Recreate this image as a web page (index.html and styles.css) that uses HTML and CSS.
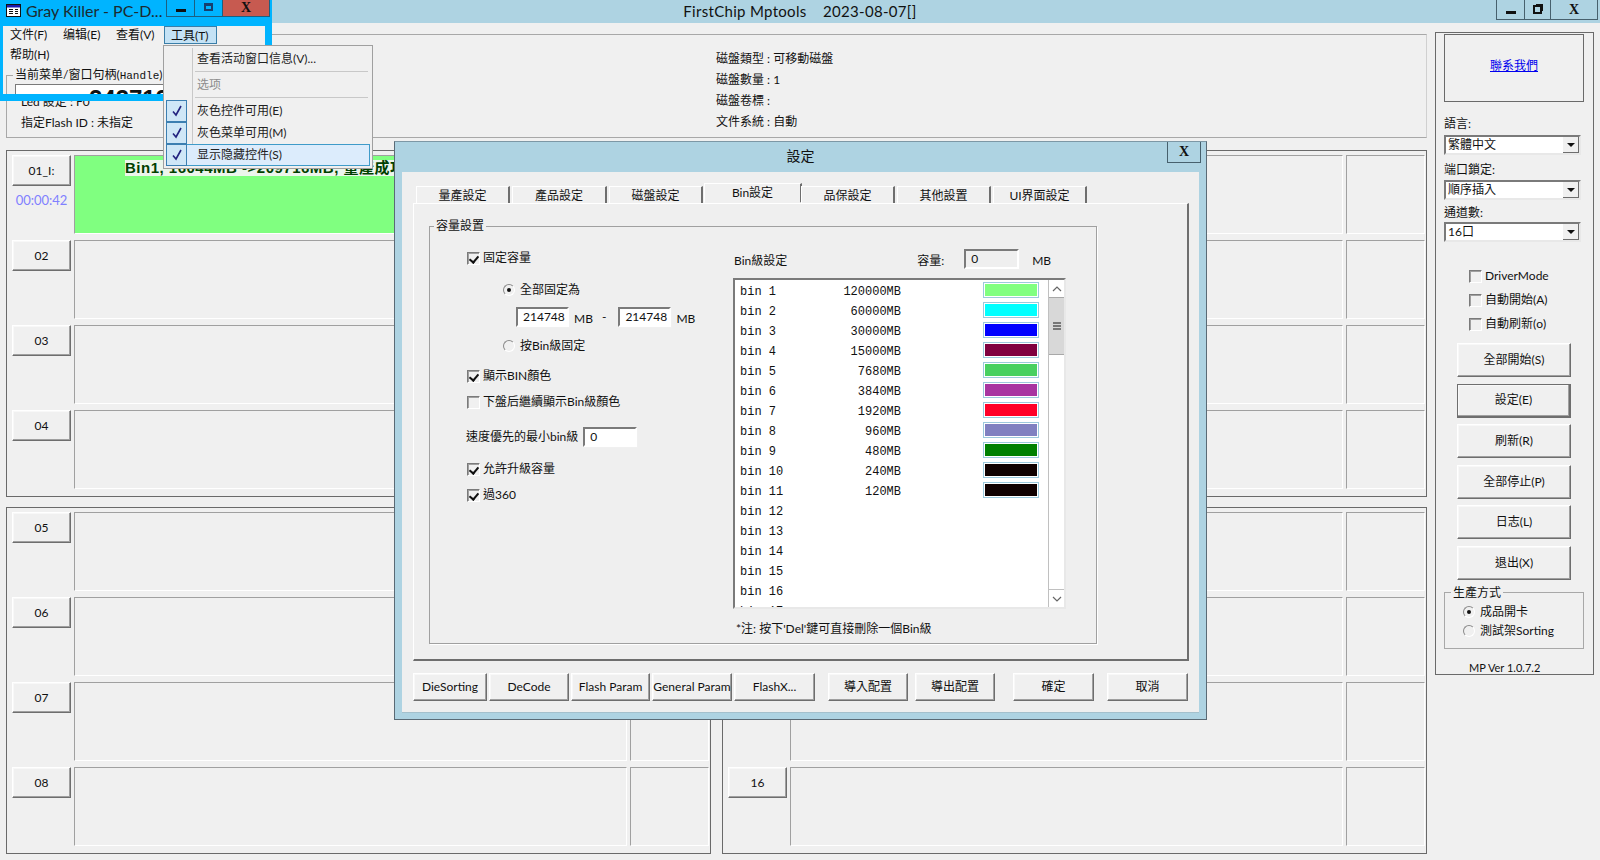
FILE: index.html
```html
<!DOCTYPE html>
<html lang="zh-Hant">
<head>
    <meta charset="UTF-8">
    <meta name="viewport" content="width=device-width, initial-scale=1.0">
    <title>FirstChip Mptools</title>
    <link rel="stylesheet" href="styles.css">
</head>
<body>
    <div class="titlebar">
        <span class="titlebar-text">FirstChip Mptools &nbsp;&nbsp; 2023-08-07[]</span>
        <div class="win-btns">
            <div class="win-btn first"><span class="ic-min"></span></div>
            <div class="win-btn"><span class="ic-restore"></span></div>
            <div class="win-btn wide">X</div>
        </div>
    </div>

    <div class="workspace">
        <div class="left">
            <div class="infobox">
                <div class="info-left">
                    <p>Led 設定 : F0</p>
                    <p>指定Flash ID : 未指定</p>
                </div>
                <div class="info-mid">
                    <p>磁盤類型 : 可移動磁盤</p>
                    <p>磁盤數量 : 1</p>
                    <p>磁盤卷標 :</p>
                    <p>文件系統 : 自動</p>
                </div>
            </div>

            <div class="channels">
                <div class="chgroup">
                    <div class="ch">
                        <div class="ch-side">
                            <div class="raised ch-btn">01_I:</div>
                            <div class="ch-time">00:00:42</div>
                        </div>
                        <div class="slot slot-ok"><span class="slot-msg">Bin1, 16044MB -&gt;209716MB, 量產成功</span></div>
                        <div class="slot-end"></div>
                    </div>
                    <div class="ch"><div class="ch-side"><div class="raised ch-btn">02</div></div><div class="slot"></div><div class="slot-end"></div></div>
                    <div class="ch"><div class="ch-side"><div class="raised ch-btn">03</div></div><div class="slot"></div><div class="slot-end"></div></div>
                    <div class="ch"><div class="ch-side"><div class="raised ch-btn">04</div></div><div class="slot"></div><div class="slot-end"></div></div>
                </div>
                <div class="chgroup">
                    <div class="ch"><div class="ch-side"><div class="raised ch-btn">09</div></div><div class="slot"></div><div class="slot-end"></div></div>
                    <div class="ch"><div class="ch-side"><div class="raised ch-btn">10</div></div><div class="slot"></div><div class="slot-end"></div></div>
                    <div class="ch"><div class="ch-side"><div class="raised ch-btn">11</div></div><div class="slot"></div><div class="slot-end"></div></div>
                    <div class="ch"><div class="ch-side"><div class="raised ch-btn">12</div></div><div class="slot"></div><div class="slot-end"></div></div>
                </div>
                <div class="chgroup">
                    <div class="ch"><div class="ch-side"><div class="raised ch-btn">05</div></div><div class="slot"></div><div class="slot-end"></div></div>
                    <div class="ch"><div class="ch-side"><div class="raised ch-btn">06</div></div><div class="slot"></div><div class="slot-end"></div></div>
                    <div class="ch"><div class="ch-side"><div class="raised ch-btn">07</div></div><div class="slot"></div><div class="slot-end"></div></div>
                    <div class="ch"><div class="ch-side"><div class="raised ch-btn">08</div></div><div class="slot"></div><div class="slot-end"></div></div>
                </div>
                <div class="chgroup">
                    <div class="ch"><div class="ch-side"><div class="raised ch-btn">13</div></div><div class="slot"></div><div class="slot-end"></div></div>
                    <div class="ch"><div class="ch-side"><div class="raised ch-btn">14</div></div><div class="slot"></div><div class="slot-end"></div></div>
                    <div class="ch"><div class="ch-side"><div class="raised ch-btn">15</div></div><div class="slot"></div><div class="slot-end"></div></div>
                    <div class="ch"><div class="ch-side"><div class="raised ch-btn">16</div></div><div class="slot"></div><div class="slot-end"></div></div>
                </div>
            </div>
        </div>

        <div class="side">
            <div class="contact"><a href="#">聯系我們</a></div>
            <div class="side-label first">語言:</div>
            <div class="combo first"><span>繁體中文</span><i class="combo-arrow"></i></div>
            <div class="side-label">端口鎖定:</div>
            <div class="combo"><span>順序插入</span><i class="combo-arrow"></i></div>
            <div class="side-label tight">通道數:</div>
            <div class="combo tight"><span>16口</span><i class="combo-arrow"></i></div>
            <div class="side-checks">
                <label class="check"><i class="box"></i>DriverMode</label>
                <label class="check"><i class="box"></i>自動開始(A)</label>
                <label class="check"><i class="box"></i>自動刷新(o)</label>
            </div>
            <div class="side-btns">
                <div class="raised side-btn">全部開始(S)</div>
                <div class="raised side-btn is-default">設定(E)</div>
                <div class="raised side-btn">刷新(R)</div>
                <div class="raised side-btn">全部停止(P)</div>
                <div class="raised side-btn">日志(L)</div>
                <div class="raised side-btn">退出(X)</div>
            </div>
            <fieldset class="mode">
                <legend>生產方式</legend>
                <label class="radio"><i class="dot on"></i>成品開卡</label>
                <label class="radio"><i class="dot"></i>測試架Sorting</label>
            </fieldset>
            <div class="version">MP Ver 1.0.7.2</div>
        </div>
    </div>

    <!-- floating tool window -->
    <div class="graykiller" lang="zh-Hans">
        <div class="gk-title">
            <svg class="gk-icon" width="15" height="13" viewBox="0 0 15 13">
                <rect x="0.5" y="0.5" width="14" height="12" fill="#fff" stroke="#111"/>
                <rect x="1" y="1" width="13" height="2.5" fill="#1a1ab0"/>
                <path d="M3 5.500h4M3 7.500h4M3 9.500h4M9 5.500h3M9 7.500h3M9 9.500h3" stroke="#111"/>
            </svg>
            <span class="gk-name">Gray Killer - PC-D...</span>
            <div class="gk-btns">
                <div class="gk-btn"><span class="ic-min"></span></div>
                <div class="gk-btn"><span class="ic-max"></span></div>
                <div class="gk-btn gk-close">X</div>
            </div>
        </div>
        <div class="gk-client">
            <div class="gk-menubar">
                <span>文件(F)</span><span>编辑(E)</span><span>查看(V)</span><span class="on">工具(T)</span>
            </div>
            <div class="gk-menubar2">帮助(H)</div>
            <div class="gk-group">
                <div class="gk-legend">当前菜单/窗口句柄(<span class="mono">Handle</span>)</div>
                <div class="gk-value">243713</div>
            </div>
        </div>
    </div>

    <div class="menu" lang="zh-Hans">
        <div class="menu-item">查看活动窗口信息(V)...</div>
        <div class="menu-sep"></div>
        <div class="menu-item off">选项</div>
        <div class="menu-sep"></div>
        <div class="menu-item checked"><i class="tick"><svg width="12" height="12" viewBox="0 0 12 12"><path d="M2 6.500l3 3.500 5-9" fill="none" stroke="#23237f" stroke-width="1.600"/></svg></i>灰色控件可用(E)</div>
        <div class="menu-item checked"><i class="tick"><svg width="12" height="12" viewBox="0 0 12 12"><path d="M2 6.500l3 3.500 5-9" fill="none" stroke="#23237f" stroke-width="1.600"/></svg></i>灰色菜单可用(M)</div>
        <div class="menu-item checked hot"><i class="tick"><svg width="12" height="12" viewBox="0 0 12 12"><path d="M2 6.500l3 3.500 5-9" fill="none" stroke="#23237f" stroke-width="1.600"/></svg></i>显示隐藏控件(S)</div>
    </div>

    <!-- settings dialog -->
    <div class="dialog">
        <div class="dlg-title">
            <span>設定</span>
            <div class="dlg-close">X</div>
        </div>
        <div class="dlg-client">
            <div class="tabs">
                <div class="tab">量產設定</div>
                <div class="tab">產品設定</div>
                <div class="tab">磁盤設定</div>
                <div class="tab active">Bin設定</div>
                <div class="tab">品保設定</div>
                <div class="tab">其他設置</div>
                <div class="tab">UI界面設定</div>
            </div>
            <div class="tab-panel">
                <fieldset class="capacity">
                    <legend>容量設置</legend>
                    <div class="cap-left">
                        <label class="check"><i class="box on"></i>固定容量</label>
                        <label class="radio indent r1"><i class="dot on"></i>全部固定為</label>
                        <div class="range">
                            <span class="edit">214748</span><span class="unit">MB</span><span class="dash">-</span>
                            <span class="edit">214748</span><span class="unit">MB</span>
                        </div>
                        <label class="radio indent r2"><i class="dot"></i>按Bin級固定</label>
                        <label class="check c1"><i class="box on"></i>顯示BIN顏色</label>
                        <label class="check c2"><i class="box"></i>下盤后繼續顯示Bin級顏色</label>
                        <div class="min-bin"><span>速度優先的最小bin級</span><span class="edit short">0</span></div>
                        <label class="check c3"><i class="box on"></i>允許升級容量</label>
                        <label class="check c4"><i class="box on"></i>過360</label>
                    </div>
                    <div class="cap-right">
                        <div class="bin-head">
                            <span>Bin級設定</span>
                            <span class="cap-label">容量:</span>
                            <span class="edit gray">0</span>
                            <span class="cap-unit">MB</span>
                        </div>
                        <div class="binlist">
                            <div class="bin-rows" id="binRows"></div>
                            <div class="scroll">
                                <div class="scroll-btn"><svg width="10" height="6" viewBox="0 0 10 6"><path d="M1 5l4-4 4 4" fill="none" stroke="#666" stroke-width="1.200"/></svg></div>
                                <div class="scroll-thumb"><i></i><i></i><i></i></div>
                                <div class="scroll-space"></div>
                                <div class="scroll-btn"><svg width="10" height="6" viewBox="0 0 10 6"><path d="M1 1l4 4 4-4" fill="none" stroke="#666" stroke-width="1.200"/></svg></div>
                            </div>
                        </div>
                        <div class="bin-note">*注: 按下'Del'鍵可直接刪除一個Bin級</div>
                    </div>
                </fieldset>
            </div>
            <div class="dlg-btns">
                <div class="raised dlg-btn w74">DieSorting</div>
                <div class="raised dlg-btn w80">DeCode</div>
                <div class="raised dlg-btn w79">Flash Param</div>
                <div class="raised dlg-btn w80">General Param</div>
                <div class="raised dlg-btn w81">FlashX...</div>
                <div class="raised dlg-btn w80 ml11">導入配置</div>
                <div class="raised dlg-btn w80 ml5">導出配置</div>
                <div class="raised dlg-btn w81 ml16">確定</div>
                <div class="raised dlg-btn w81 ml11">取消</div>
            </div>
        </div>
    </div>

    <script>
        // bin table, filled from data so the rows stay in one place
        const bins = [
            ['120000MB', '#80ff80'], ['60000MB', '#00ffff'], ['30000MB', '#0000ff'],
            ['15000MB', '#800040'], ['7680MB', '#48d060'], ['3840MB', '#a834a0'],
            ['1920MB', '#ff0028'], ['960MB', '#8080c0'], ['480MB', '#008000'],
            ['240MB', '#100000'], ['120MB', '#100000']
        ];
        const rows = document.getElementById('binRows');
        let html = '';
        for (let i = 0; i < 17; i++) {
            const b = bins[i];
            html += '<div class="bin-row"><span class="bin-name">bin ' + (i + 1) + '</span>';
            if (b) {
                html += '<span class="bin-size">' + b[0] + '</span>';
                html += '<span class="bin-swatch"><i style="background:' + b[1] + '"></i></span>';
            }
            html += '</div>';
        }
        rows.innerHTML = html;
    </script>
</body>
</html>
```
FILE: styles.css
```css
* {
    box-sizing: border-box;
}

body {
    margin: 0;
    width: 1600px;
    height: 860px;
    overflow: hidden;
    position: relative;
    background: #f0f0f0;
    color: #111;
    font-family: Lato, "Noto Sans CJK TC", sans-serif;
    font-size: 12px;
    line-height: 16px;
}

p {
    margin: 0;
}

i {
    font-style: normal;
}

/* classic 3d edges */
.raised {
    background: #f0f0f0;
    border: 1px solid;
    border-color: #fff #6e6e6e #6e6e6e #fff;
    box-shadow: inset -1px -1px 0 #a0a0a0, inset 1px 1px 0 #f8f8f8;
    display: flex;
    align-items: center;
    justify-content: center;
}

.edit {
    display: flex;
    align-items: center;
    height: 20px;
    padding-left: 5px;
    background: #fff;
    border: 2px solid;
    border-color: #7a7a7a #fff #fff #7a7a7a;
    outline: 1px solid #f0f0f0;
}

/* main title bar */
.titlebar {
    height: 23px;
    padding-bottom: 1px;
    background: #aed3e2;
    position: relative;
    display: flex;
    justify-content: center;
    align-items: center;
    font-size: 15px;
}

.titlebar-text {
    letter-spacing: 0.3px;
}

.win-btns {
    position: absolute;
    right: 2px;
    top: 0;
    height: 20px;
    display: flex;
    border: 1px solid #47606d;
    border-top: 0;
}

.win-btn {
    width: 26px;
    border-right: 1px solid #47606d;
    display: flex;
    align-items: center;
    justify-content: center;
    font-family: "Liberation Serif", serif;
    font-weight: bold;
    font-size: 14px;
}

.win-btn.first {
    width: 28px;
}

.win-btn:last-child {
    border-right: 0;
}

.win-btn.wide {
    width: 46px;
}

.ic-min {
    display: block;
    width: 10px;
    height: 3px;
    margin-top: 5px;
    background: #111;
}

.ic-restore {
    display: block;
    width: 9px;
    height: 9px;
    border: 2px solid #111;
    box-shadow: 2px -2px 0 -1px #111;
}

.ic-max {
    display: block;
    width: 9px;
    height: 8px;
    border: 2px solid #173f6e;
    border-top-width: 3px;
    margin-bottom: 3px;
}

/* workspace */
.workspace {
    display: flex;
    gap: 8px;
    padding: 9px 6px 0;
}

.left {
    width: 1421px;
}

.infobox {
    height: 104px;
    margin-top: 2px;
    border: 1px solid #a8a8a8;
    border-right-color: #d0d0d0;
    display: flex;
    padding: 16px 0 6px 14px;
}

.info-left {
    width: 695px;
    display: flex;
    flex-direction: column;
    justify-content: flex-end;
    gap: 5px;
}

.info-mid {
    display: flex;
    flex-direction: column;
    gap: 5px;
}

.channels {
    margin-top: 12px;
    display: grid;
    grid-template-columns: 705px 705px;
    column-gap: 11px;
    row-gap: 10px;
}

.chgroup {
    height: 347px;
    border: 1px solid #6a6a6a;
    padding: 4px 1px 0 5px;
    display: flex;
    flex-direction: column;
    gap: 6px;
}

.ch {
    height: 79px;
    display: flex;
}

.ch-side {
    width: 62px;
    flex: none;
}

.ch-btn {
    width: 59px;
    height: 31px;
}

.ch-time {
    margin-top: 6px;
    text-align: center;
    color: #8080ff;
    font-size: 13px;
    padding-right: 3px;
}

.slot,
.slot-end {
    border: 1px solid;
    border-color: #a0a0a0 #fff #fff #a0a0a0;
    background-clip: padding-box;
}

.slot {
    width: 553px;
    overflow: hidden;
    white-space: nowrap;
}

.slot-end {
    width: 79px;
    margin-left: 3px;
}

.slot-ok {
    background-color: #80ff80;
    padding-left: 50px;
}

.slot-msg {
    display: inline-block;
    margin-top: 4px;
    background: #ecf5ec;
    color: #004000;
    font-family: "Liberation Sans", "Noto Sans CJK TC", sans-serif;
    font-weight: bold;
    font-size: 15px;
    letter-spacing: 0.5px;
    line-height: 16px;
}

/* right panel */
.side {
    width: 159px;
    height: 643px;
    border: 1px solid #6a6a6a;
    padding: 1px 0 0 8px;
}

.contact {
    width: 140px;
    height: 68px;
    padding-bottom: 4px;
    border: 1px solid #6a6a6a;
    display: flex;
    align-items: center;
    justify-content: center;
}

.contact a {
    color: #0000ee;
}

.side-label {
    height: 16px;
    margin-top: 7px;
}

.side-label.first {
    margin-top: 14px;
}

.side-label.tight {
    margin-top: 5px;
}

.combo {
    width: 137px;
    height: 20px;
    margin-top: 2px;
    background: #fff;
    border: 2px solid;
    border-color: #7a7a7a #e8e8e8 #e8e8e8 #7a7a7a;
    display: flex;
    align-items: center;
    justify-content: space-between;
    padding-left: 2px;
}

.combo.first {
    margin-top: 3px;
}

.combo.tight {
    margin-top: 1px;
}

.combo-arrow {
    width: 16px;
    height: 16px;
    background: #f0f0f0;
    border-right: 1px solid #6e6e6e;
    border-bottom: 1px solid #6e6e6e;
    position: relative;
}

.combo-arrow::after {
    content: "";
    position: absolute;
    left: 4px;
    top: 6px;
    border: 4px solid transparent;
    border-top: 4px solid #111;
}

.check,
.radio {
    display: flex;
    align-items: center;
    height: 20px;
}

.box {
    width: 13px;
    height: 13px;
    margin-right: 3px;
    background: #f0f0f0;
    border: 1px solid;
    border-color: #7a7a7a #fff #fff #7a7a7a;
    box-shadow: inset 1px 1px 0 #a0a0a0;
    position: relative;
    flex: none;
}

.box.on::after {
    content: "";
    position: absolute;
    left: 3px;
    top: 1px;
    width: 4px;
    height: 7px;
    border: solid #111;
    border-width: 0 2px 2px 0;
    transform: rotate(40deg);
}

.dot {
    width: 12px;
    height: 12px;
    margin-right: 5px;
    border-radius: 50%;
    background: #f0f0f0;
    border: 1px solid;
    border-color: #8a8a8a #fff #fff #8a8a8a;
    position: relative;
    flex: none;
}

.dot.on::after {
    content: "";
    position: absolute;
    left: 3px;
    top: 3px;
    width: 4px;
    height: 4px;
    border-radius: 50%;
    background: #111;
}

.side-checks {
    margin: 24px 0 0 25px;
    display: flex;
    flex-direction: column;
    gap: 4px;
}

.side-btns {
    margin: 9px 0 0 13px;
    display: flex;
    flex-direction: column;
    gap: 6.600px;
}

.side-btn {
    width: 114px;
    height: 34px;
}

.side-btn.is-default {
    border-color: #6e6e6e;
    border-width: 1px 2px 2px 1px;
}

.mode {
    margin: 5px 0 0;
    padding: 2px 0 0 18px;
    width: 140px;
    height: 64px;
    border: 1px solid #a8a8a8;
}

.mode legend {
    padding: 0 2px;
    margin-left: -12px;
}

.mode .radio {
    height: 19px;
}

.version {
    margin-top: 11px;
    padding-left: 25px;
    font-size: 11px;
}

/* Gray Killer */
.graykiller {
    position: absolute;
    left: 0;
    top: 0;
    width: 272px;
    height: 101px;
    background: #00b4ff;
    font-family: Lato, "Noto Sans CJK SC", sans-serif;
}

.gk-title {
    height: 26px;
    display: flex;
    align-items: flex-start;
    position: relative;
}

.gk-icon {
    margin: 4px 0 0 6px;
}

.gk-name {
    margin-left: 5px;
    font-size: 16px;
    line-height: 22px;
    color: #1c2a30;
}

.gk-btns {
    position: absolute;
    left: 166px;
    top: 0;
    height: 17px;
    display: flex;
    border: 1px solid #1c5f80;
    border-top: 0;
}

.gk-btn {
    width: 28px;
    border-right: 1px solid #1c5f80;
    display: flex;
    align-items: center;
    justify-content: center;
}

.gk-close {
    width: 46px;
    border-right: 0;
    background: #c75a50;
    font-family: "Liberation Serif", serif;
    font-weight: bold;
    font-size: 14px;
}

.gk-client {
    margin: 0 7px 0 3px;
    height: 68px;
    background: #f0f0f0;
    overflow: hidden;
}

.gk-menubar {
    height: 18px;
    display: flex;
    align-items: center;
}

.gk-menubar span {
    margin-left: 7px;
    width: 46px;
    white-space: nowrap;
}

.gk-menubar .on {
    margin-left: 2px;
    width: 53px;
    height: 18px;
    padding-left: 6px;
    line-height: 17px;
    background: #c4e2f5;
    border: 1px solid #3a7ea8;
}

.gk-menubar2 {
    height: 19px;
    padding-left: 7px;
    line-height: 21px;
}

.gk-group {
    height: 40px;
    margin: 12px 0 0 3px;
    border: 1px solid #a8a8a8;
    border-bottom: 0;
}

.gk-legend {
    margin: -9px 0 0 6px;
    width: max-content;
    background: #f0f0f0;
    padding: 0 2px;
    line-height: 16px;
}

.mono {
    font-family: "Liberation Mono", monospace;
    font-size: 11px;
}

.gk-value {
    margin: 0 0 0 8px;
    width: 228px;
    height: 30px;
    padding-top: 2px;
    background: #fff;
    border: 1px solid #7a7a7a;
    text-align: center;
    font-family: "Liberation Sans", sans-serif;
    font-weight: bold;
    font-size: 24px;
    line-height: 24px;
}

/* tools menu */
.menu {
    position: absolute;
    left: 163px;
    top: 45px;
    width: 210px;
    height: 124px;
    padding: 2px;
    background: #f0f0f0;
    border: 1px solid #a0a0a0;
    font-family: Lato, "Noto Sans CJK SC", sans-serif;
    color: #222;
}

.menu::before {
    content: "";
    position: absolute;
    left: 28px;
    top: 2px;
    bottom: 22px;
    width: 1px;
    background: #c8c8c8;
}

.menu-item {
    height: 22px;
    padding-left: 31px;
    display: flex;
    align-items: center;
    position: relative;
}

.menu-item.off {
    color: #8c8c8c;
}

.menu-sep {
    height: 1px;
    margin: 1px 2px 2px 29px;
    background: #c8c8c8;
}

.tick {
    position: absolute;
    left: 0;
    top: 0;
    width: 21px;
    height: 22px;
    background: #cfe7f7;
    border: 1px solid #3c7fb1;
    display: flex;
    align-items: center;
    justify-content: center;
}

.menu-item.hot {
    background: #dcecfc;
    outline: 1px solid #3f9bc9;
    outline-offset: -1px;
}

/* settings dialog */
.dialog {
    position: absolute;
    left: 394px;
    top: 141px;
    width: 813px;
    height: 579px;
    background: #aed3e2;
    border: 1px solid #5a6a75;
    border-top-color: #7d97a5;
}

.dlg-title {
    height: 30px;
    padding-bottom: 2px;
    position: relative;
    display: flex;
    align-items: center;
    justify-content: center;
    font-size: 14px;
}

.dlg-close {
    position: absolute;
    left: 772px;
    top: 0;
    width: 34px;
    height: 21px;
    border: 1px solid #47606d;
    border-top: 0;
    display: flex;
    align-items: center;
    justify-content: center;
    font-family: "Liberation Serif", serif;
    font-weight: bold;
    font-size: 14px;
}

.dlg-client {
    height: 541px;
    margin: 0 7px;
    padding: 12px 11px 0;
    background: #efefef;
    border-bottom: 1px solid #a4c0cc;
}

.tabs {
    display: flex;
    align-items: flex-end;
    height: 19px;
    padding-left: 3px;
    position: relative;
    z-index: 1;
}

.tab {
    width: 94px;
    height: 17px;
    margin-right: 2px;
    text-align: center;
    line-height: 18px;
    border-top: 1px solid #fff;
    border-left: 1px solid #fff;
    border-right: 2px solid #6e6e6e;
    background: #f0f0f0;
}

.tab:nth-child(2) {
    width: 95px;
}

.tab.active {
    width: 98px;
    height: 20px;
    margin-left: -1px;
    margin-right: -1px;
    line-height: 17px;
    border-bottom: 1px solid #f0f0f0;
}

.tab-panel {
    width: 776px;
    height: 458px;
    padding: 14px 0 0 15px;
    border: 1px solid;
    border-color: #fff #6e6e6e #6e6e6e #fff;
    border-width: 1px 2px 2px 1px;
}

.capacity {
    width: 668px;
    height: 426px;
    margin: 0;
    padding: 0;
    border: 1px solid #a0a0a0;
    box-shadow: 1px 1px 0 #fff;
    display: flex;
    position: relative;
}

.capacity legend {
    padding: 0 2px;
    margin-left: 4px;
}

.cap-left {
    width: 304px;
    padding: 14px 0 0 37px;
    display: flex;
    flex-direction: column;
    flex: none;
}

.cap-left .indent {
    margin-left: 36px;
}

.r1 { margin-top: 12px; }
.r2 { margin-top: 9px; }
.c1 { margin-top: 10px; }
.c2 { margin-top: 6px; }
.c3 { margin-top: 12px; }
.c4 { margin-top: 6px; }

.range {
    height: 20px;
    margin: 7px 0 0 49px;
    display: flex;
    align-items: center;
}

.range .edit {
    width: 53px;
}

.unit {
    margin: 4px 6px 0 5px;
}

.dash {
    margin: 0 12px 0 3px;
}

.min-bin {
    height: 20px;
    margin-top: 15px;
    margin-left: -1px;
    display: flex;
    align-items: center;
    gap: 5px;
}

.edit.short {
    width: 54px;
}

.bin-head {
    height: 22px;
    margin-top: 16px;
    display: flex;
    align-items: center;
}

.cap-label {
    margin-left: 130px;
    width: 47px;
}

.edit.gray {
    width: 55px;
    background: #efefef;
    margin-top: -4px;
    border-color: #7a7a7a #fff #fff #7a7a7a;
}

.cap-unit {
    margin-left: 13px;
}

.binlist {
    width: 333px;
    height: 331px;
    margin: 6px 0 0 -1px;
    display: flex;
    background: #fff;
    border: 2px solid;
    border-color: #7a7a7a #e8e8e8 #e8e8e8 #7a7a7a;
    overflow: hidden;
}

.bin-rows {
    width: 313px;
    flex: none;
    font-family: "Liberation Mono", monospace;
    padding: 2px 0 0 5px;
    height: 329px;
    overflow: hidden;
}

.bin-row {
    height: 20px;
    display: flex;
    align-items: center;
    position: relative;
}

.bin-name {
    width: 56px;
}

.bin-size {
    position: absolute;
    left: 59px;
    width: 102px;
    text-align: right;
}

.bin-swatch {
    position: absolute;
    left: 243px;
    top: 0;
    width: 56px;
    height: 16px;
    padding: 1px;
    border: 1px solid #9cc9dd;
    background: #fff;
}

.bin-swatch i {
    display: block;
    height: 100%;
}

.scroll {
    width: 17px;
    display: flex;
    flex-direction: column;
    border-left: 1px solid #c0c0c0;
    border-right: 1px solid #c0c0c0;
    flex: none;
}

.scroll-btn {
    height: 17px;
    display: flex;
    align-items: center;
    justify-content: center;
    flex: none;
}

.scroll-thumb {
    height: 58px;
    background: #d8d8d8;
    border-top: 1px solid #a8a8a8;
    border-bottom: 1px solid #a8a8a8;
    display: flex;
    flex-direction: column;
    align-items: center;
    padding-top: 24px;
    gap: 1px;
}

.scroll-thumb i {
    display: block;
    width: 8px;
    height: 2px;
    background: #777;
}

.scroll-space {
    flex: 1;
    border-bottom: 1px solid #c0c0c0;
}

.bin-note {
    margin-top: 12px;
    padding-left: 2px;
}

.dlg-btns {
    display: flex;
    margin-top: 12px;
    gap: 2px;
}

.dlg-btn {
    height: 28px;
    white-space: nowrap;
}

.w74 { width: 74px; }
.w79 { width: 79px; }
.w80 { width: 80px; }
.w81 { width: 81px; }
.ml5 { margin-left: 5px; }
.ml11 { margin-left: 11px; }
.ml16 { margin-left: 16px; }
```
